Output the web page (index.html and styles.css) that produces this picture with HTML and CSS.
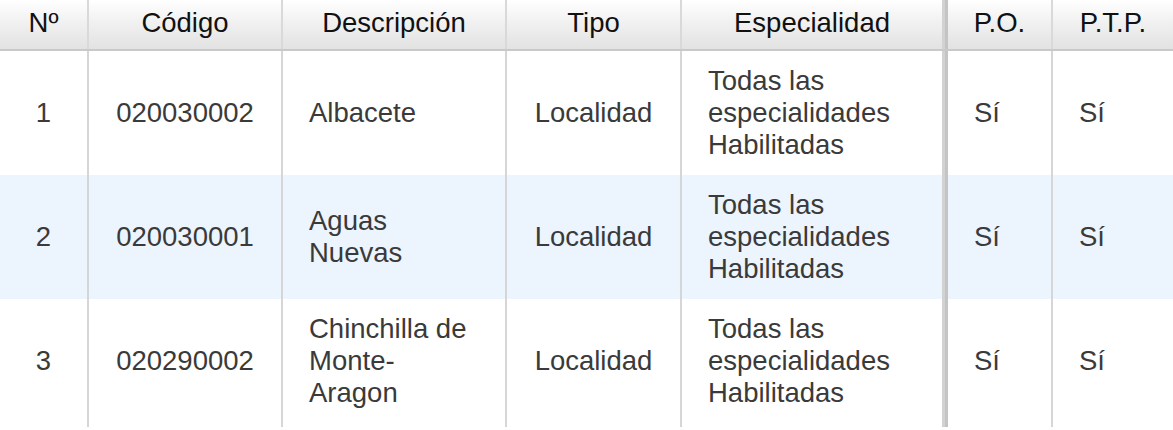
FILE: index.html
```html
<!DOCTYPE html>
<html lang="es">
<head>
<meta charset="utf-8">
<title>Localidades</title>
<link rel="stylesheet" href="styles.css">
</head>
<body>
<div class="grid">
  <div class="row head">
    <div class="cell c">Nº</div>
    <div class="cell c">Código</div>
    <div class="cell c">Descripción</div>
    <div class="cell c">Tipo</div>
    <div class="cell c split">Especialidad</div>
    <div class="cell c after">P.O.</div>
    <div class="cell c last">P.T.P.</div>
  </div>
  <div class="row">
    <div class="cell c">1</div>
    <div class="cell c">020030002</div>
    <div class="cell l">Albacete</div>
    <div class="cell c">Localidad</div>
    <div class="cell l split">Todas las especialidades Habilitadas</div>
    <div class="cell l after">Sí</div>
    <div class="cell l last">Sí</div>
  </div>
  <div class="row alt">
    <div class="cell c">2</div>
    <div class="cell c">020030001</div>
    <div class="cell l">Aguas Nuevas</div>
    <div class="cell c">Localidad</div>
    <div class="cell l split">Todas las especialidades Habilitadas</div>
    <div class="cell l after">Sí</div>
    <div class="cell l last">Sí</div>
  </div>
  <div class="row final">
    <div class="cell c">3</div>
    <div class="cell c">020290002</div>
    <div class="cell l">Chinchilla de Monte-Aragon</div>
    <div class="cell c">Localidad</div>
    <div class="cell l split">Todas las especialidades Habilitadas</div>
    <div class="cell l after">Sí</div>
    <div class="cell l last">Sí</div>
  </div>
</div>
</body>
</html>
```
FILE: styles.css
```css
html, body {
  margin: 0;
  padding: 0;
  background: #ffffff;
  overflow: hidden;
}

.grid {
  width: 1173px;
  font-family: "Liberation Sans", Arial, sans-serif;
  font-size: 27.5px;
  color: #3a3a3a;
}

.row {
  display: grid;
  grid-template-columns: 89px 194px 224px 175px 263px 108px 120px;
  height: 124px;
}

.row.alt {
  background: #ecf4fd;
}

.row.final {
  height: 128px;
}

.row.final .cell {
  padding-bottom: 4px;
}

.cell {
  box-sizing: border-box;
  border-right: 2px solid #d6d6d6;
  display: flex;
  align-items: center;
  padding: 0 25px 0 26px;
  line-height: 32px;
}

.cell.c {
  justify-content: center;
  text-align: center;
  padding: 0 4px;
}

.cell.l {
  justify-content: flex-start;
}

.cell.split {
  border-right: 3px solid #d2d2d2;
}

.cell.after {
  border-left: 3px solid #c4c4c4;
}

.cell.last {
  border-right: none;
}

.row.head {
  height: 51px;
  background: linear-gradient(to bottom, #ffffff 0%, #f1f1f1 45%, #e2e2e2 100%);
  border-bottom: 2px solid #c9c9c9;
  box-sizing: border-box;
  color: #111111;
}

.row.head .cell {
  align-items: flex-start;
  line-height: 45px;
  border-right-color: #d9d9d9;
}

.row.head .cell.split {
  border-right-color: #d2d2d2;
}
```
